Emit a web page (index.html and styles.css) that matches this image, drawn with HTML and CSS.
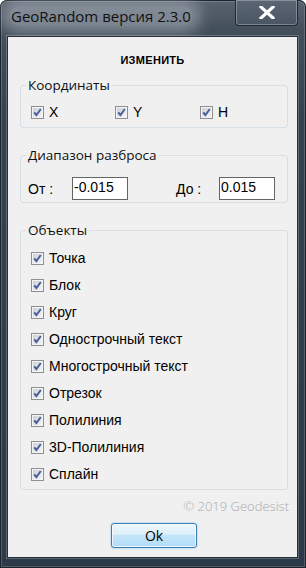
FILE: index.html
```html
<!DOCTYPE html>
<html lang="ru">
<head>
    <meta charset="UTF-8">
    <meta name="viewport" content="width=device-width, initial-scale=1.0">
    <title>GeoRandom версия 2.3.0</title>
    <link rel="stylesheet" href="styles.css">
</head>
<body>
    <div class="window">
        <div class="titlebar">
            <span class="title">GeoRandom версия 2.3.0</span>
            <button class="close" aria-label="Закрыть">
                <svg width="16" height="13" viewBox="0 0 16 13">
                    <path d="M2 1 L14 12 M14 1 L2 12" stroke="#fff" stroke-width="3.2" stroke-linecap="square"/>
                </svg>
            </button>
        </div>

        <div class="client">
            <h1 class="caption">ИЗМЕНИТЬ</h1>

            <!-- Coordinates -->
            <fieldset class="group">
                <legend>Координаты</legend>
                <div class="coords">
                    <label class="check"><span class="box"></span>X</label>
                    <label class="check"><span class="box"></span>Y</label>
                    <label class="check"><span class="box"></span>H</label>
                </div>
            </fieldset>

            <!-- Range -->
            <fieldset class="group range-group">
                <legend>Диапазон разброса</legend>
                <div class="range">
                    <span>От :</span>
                    <input type="text" value="-0.015">
                    <span></span>
                    <span>До :</span>
                    <input type="text" value="0.015">
                </div>
            </fieldset>

            <!-- Objects -->
            <fieldset class="group objects-group">
                <legend>Объекты</legend>
                <div class="objects">
                    <label class="check"><span class="box"></span>Точка</label>
                    <label class="check"><span class="box"></span>Блок</label>
                    <label class="check"><span class="box"></span>Круг</label>
                    <label class="check"><span class="box"></span>Однострочный текст</label>
                    <label class="check"><span class="box"></span>Многострочный текст</label>
                    <label class="check"><span class="box"></span>Отрезок</label>
                    <label class="check"><span class="box"></span>Полилиния</label>
                    <label class="check"><span class="box"></span>3D-Полилиния</label>
                    <label class="check"><span class="box"></span>Сплайн</label>
                </div>
            </fieldset>

            <div class="copyright">© 2019 Geodesist</div>
            <button class="ok">Ok</button>
        </div>
    </div>
</body>
</html>
```

FILE: styles.css
```css
body {
    margin: 0;
    background: #fff;
}
.window {
    width: 306px;
    height: 568px;
    box-sizing: border-box;
    display: flex;
    flex-direction: column;
    background: linear-gradient(180deg, #59636f 0, #444f5c 30px, #34414f 120px, #2c3948 100%);
    border-radius: 7px 7px 0 0;
    box-shadow: inset 0 0 0 1px #1b232d, inset 0 0 0 2px rgba(255, 255, 255, 0.18);
}
.titlebar {
    height: 36px;
    display: flex;
    justify-content: space-between;
    align-items: flex-start;
    flex-shrink: 0;
}
.title {
    margin: 6px 0 0 9px;
    padding: 0 2px;
    font: 15px "Open Sans", sans-serif;
    color: #111;
    background: rgba(200, 207, 214, 0.4);
    border-radius: 12px;
    box-shadow: 0 0 14px 8px rgba(200, 207, 214, 0.4);
}
.close {
    width: 63px;
    height: 26px;
    margin-right: 8px;
    padding: 0;
    display: flex;
    align-items: center;
    justify-content: center;
    background: linear-gradient(180deg, #5b6674, #4a5564);
    border: 1px solid #1f2833;
    border-top: 0;
    border-radius: 0 0 4px 4px;
    box-shadow: inset 0 0 0 1px rgba(255, 255, 255, 0.28);
}
.client {
    flex: 1;
    margin: 0 8px 10px 7px;
    display: flex;
    flex-direction: column;
    background: #f0f0f0;
    border: 1px solid #25303c;
    box-shadow: 0 0 0 1px rgba(255, 255, 255, 0.22);
    font: 14px "Liberation Sans", Arial, sans-serif;
    color: #000;
}
.caption {
    margin: 16px 0 0;
    height: 14px;
    font: bold 11px/14px "Liberation Sans", Arial, sans-serif;
    text-align: center;
    letter-spacing: 0.3px;
}
.group {
    margin: 9px 9px 0 12px;
    padding: 12px 10px 8px;
    border: 1px solid #d5dfe5;
    border-radius: 3px;
    min-width: 0;
}
.group legend {
    margin-left: -5px;
    padding: 0 2px;
    font: 13.5px/18px "Open Sans", sans-serif;
    color: #111;
}
.range-group {
    margin-top: 18px;
    padding: 13px 10px 2px;
}
.objects-group {
    margin-top: 18px;
    padding: 13px 10px 8px;
}
.check {
    display: flex;
    align-items: center;
    gap: 5px;
    height: 13px;
    line-height: 13px;
}
.box {
    width: 13px;
    height: 13px;
    box-sizing: border-box;
    flex-shrink: 0;
    border: 1px solid #8e8f8f;
    background: url("data:image/svg+xml;utf8,<svg xmlns='http://www.w3.org/2000/svg' width='11' height='11'><path d='M2.2 5.3 L4.4 8 L8.8 2' fill='none' stroke='%234a5f9c' stroke-width='2'/></svg>") no-repeat center, linear-gradient(135deg, #c8ccd2 0, #e6e8ec 60%, #f6f6f6 100%);
    box-shadow: inset 0 0 0 1px #f4f4f4;
}
.coords {
    display: grid;
    grid-template-columns: 84px 85px auto;
}
.range {
    display: grid;
    grid-template-columns: 44px 56px 48px 43px 56px;
    align-items: center;
    margin-left: -3px;
}
.range input {
    width: 56px;
    height: 23px;
    box-sizing: border-box;
    padding: 0 0 3px 1px;
    border: 1px solid #646464;
    background: #fff;
    font: 14px "Liberation Sans", Arial, sans-serif;
    color: #000;
}
.objects {
    display: flex;
    flex-direction: column;
    gap: 14px;
}
.copyright {
    margin: 8px 8px 0 0;
    text-align: right;
    font: 300 13px/16px "Open Sans", sans-serif;
    color: #a9a9a9;
}
.ok {
    align-self: center;
    width: 86px;
    height: 25px;
    margin: 9px 0 0 3px;
    border: 1px solid #3c7fb1;
    border-radius: 3px;
    background: linear-gradient(180deg, #edf7fd 0, #dceffb 45%, #c3e5f9 50%, #b2dcf6 100%);
    box-shadow: inset 0 0 0 1px rgba(255, 255, 255, 0.7), 0 0 2px #7dc2ec;
    font: 14px "Open Sans", sans-serif;
    color: #000;
}
```
